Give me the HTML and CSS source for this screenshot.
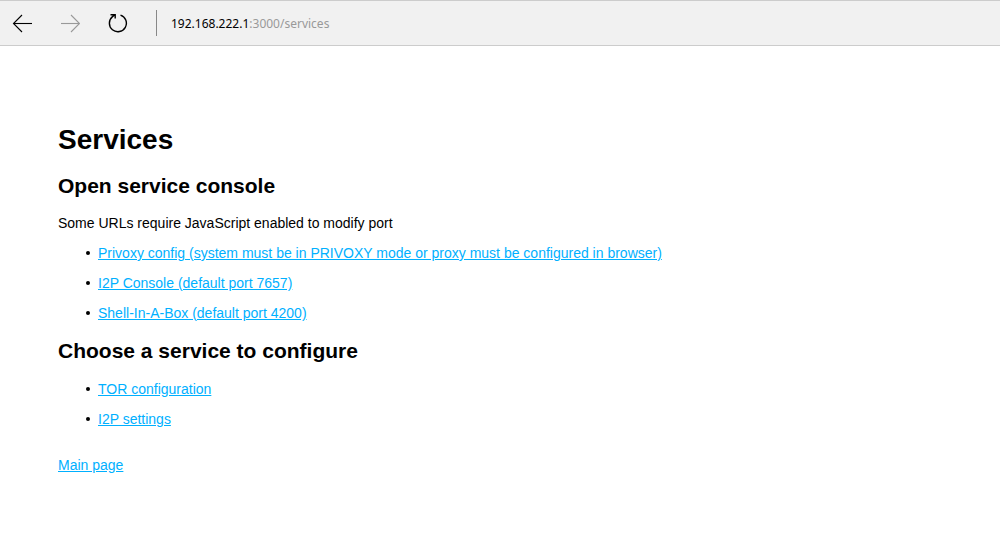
FILE: index.html
```
<!DOCTYPE html>
<html lang="en">
<head>
<meta charset="utf-8">
<title>Services</title>
<link rel="stylesheet" href="styles.css">
</head>
<body>
<header class="toolbar">
  <nav class="nav-buttons" aria-label="Browser navigation">
    <button class="nav-button" type="button" aria-label="Back">
      <svg viewBox="0 0 20 20"><path d="M20 10.500H2"/><path d="M10 2L1.500 10.500L10 19"/></svg>
    </button>
    <button class="nav-button" type="button" aria-label="Forward" disabled>
      <svg viewBox="0 0 20 20"><path d="M1 10.500H19"/><path d="M11 2L19.500 10.500L11 19"/></svg>
    </button>
    <button class="nav-button" type="button" aria-label="Refresh">
      <svg viewBox="0 0 20 20"><path stroke-width="1.400" d="M12.500 2.100A8.500 8.500 0 1 1 4.500 3.600L7 1.800M2.500 1.700H7.200V5.500"/></svg>
    </button>
  </nav>
  <div class="address" role="textbox" aria-label="Address" tabindex="0"><span class="host">192.168.222.1</span>:3000/services</div>
</header>
<main class="page">
  <h1 class="title">Services</h1>
  <h2 class="heading">Open service console</h2>
  <p class="note">Some URLs require JavaScript enabled to modify port</p>
  <ul class="links">
    <li><a href="#privoxy">Privoxy config (system must be in PRIVOXY mode or proxy must be configured in browser)</a></li>
    <li><a href="#console">I2P Console (default port 7657)</a></li>
    <li><a href="#shell">Shell-In-A-Box (default port 4200)</a></li>
  </ul>
  <h2 class="heading">Choose a service to configure</h2>
  <ul class="links">
    <li><a href="#tor">TOR configuration</a></li>
    <li><a href="#i2p">I2P settings</a></li>
  </ul>
  <p class="footer"><a href="#main">Main page</a></p>
</main>
</body>
</html>
```
FILE: styles.css
```
body {
  margin: 0;
  background: #fff;
  color: #000;
  font: 14px/20px "Liberation Sans", Arial, sans-serif;
}
.toolbar {
  display: flex;
  align-items: center;
  box-sizing: border-box;
  height: 46px;
  padding: 0 12px;
  background: #f1f1f1;
  border-top: 1px solid #ccc;
  border-bottom: 1px solid #ccc;
}
.nav-buttons {
  display: flex;
  gap: 28px;
}
.nav-button {
  display: block;
  width: 20px;
  height: 20px;
  padding: 0;
  border: 0;
  background: none;
  color: #000;
}
.nav-button:disabled { color: #999; }
.nav-button svg {
  display: block;
  width: 20px;
  height: 20px;
  fill: none;
  stroke: currentColor;
  stroke-width: 1.1;
}
.address {
  margin-left: 28px;
  padding: 4px 0 2px 14px;
  border-left: 1px solid #888;
  color: #999;
  font: 12px/20px "Noto Sans", sans-serif;
}
.host { color: #000; }
.page { padding: 76px 58px 40px; }
.title { margin: 0; font-size: 28px; line-height: 36px; }
.heading { margin: 12px 0; font-size: 21px; line-height: 32px; }
.note { margin: 0; line-height: 18px; }
.links {
  margin: 11px 0 10px;
  padding-left: 28px;
  list-style: none;
}
.links li {
  display: flex;
  align-items: center;
  gap: 8px;
  margin-bottom: 10px;
}
.links li::before {
  content: "";
  flex: none;
  width: 4px;
  height: 4px;
  border-radius: 50%;
  background: #000;
}
.footer { margin: 26px 0 0; }
a { color: #00b0ff; }
```
